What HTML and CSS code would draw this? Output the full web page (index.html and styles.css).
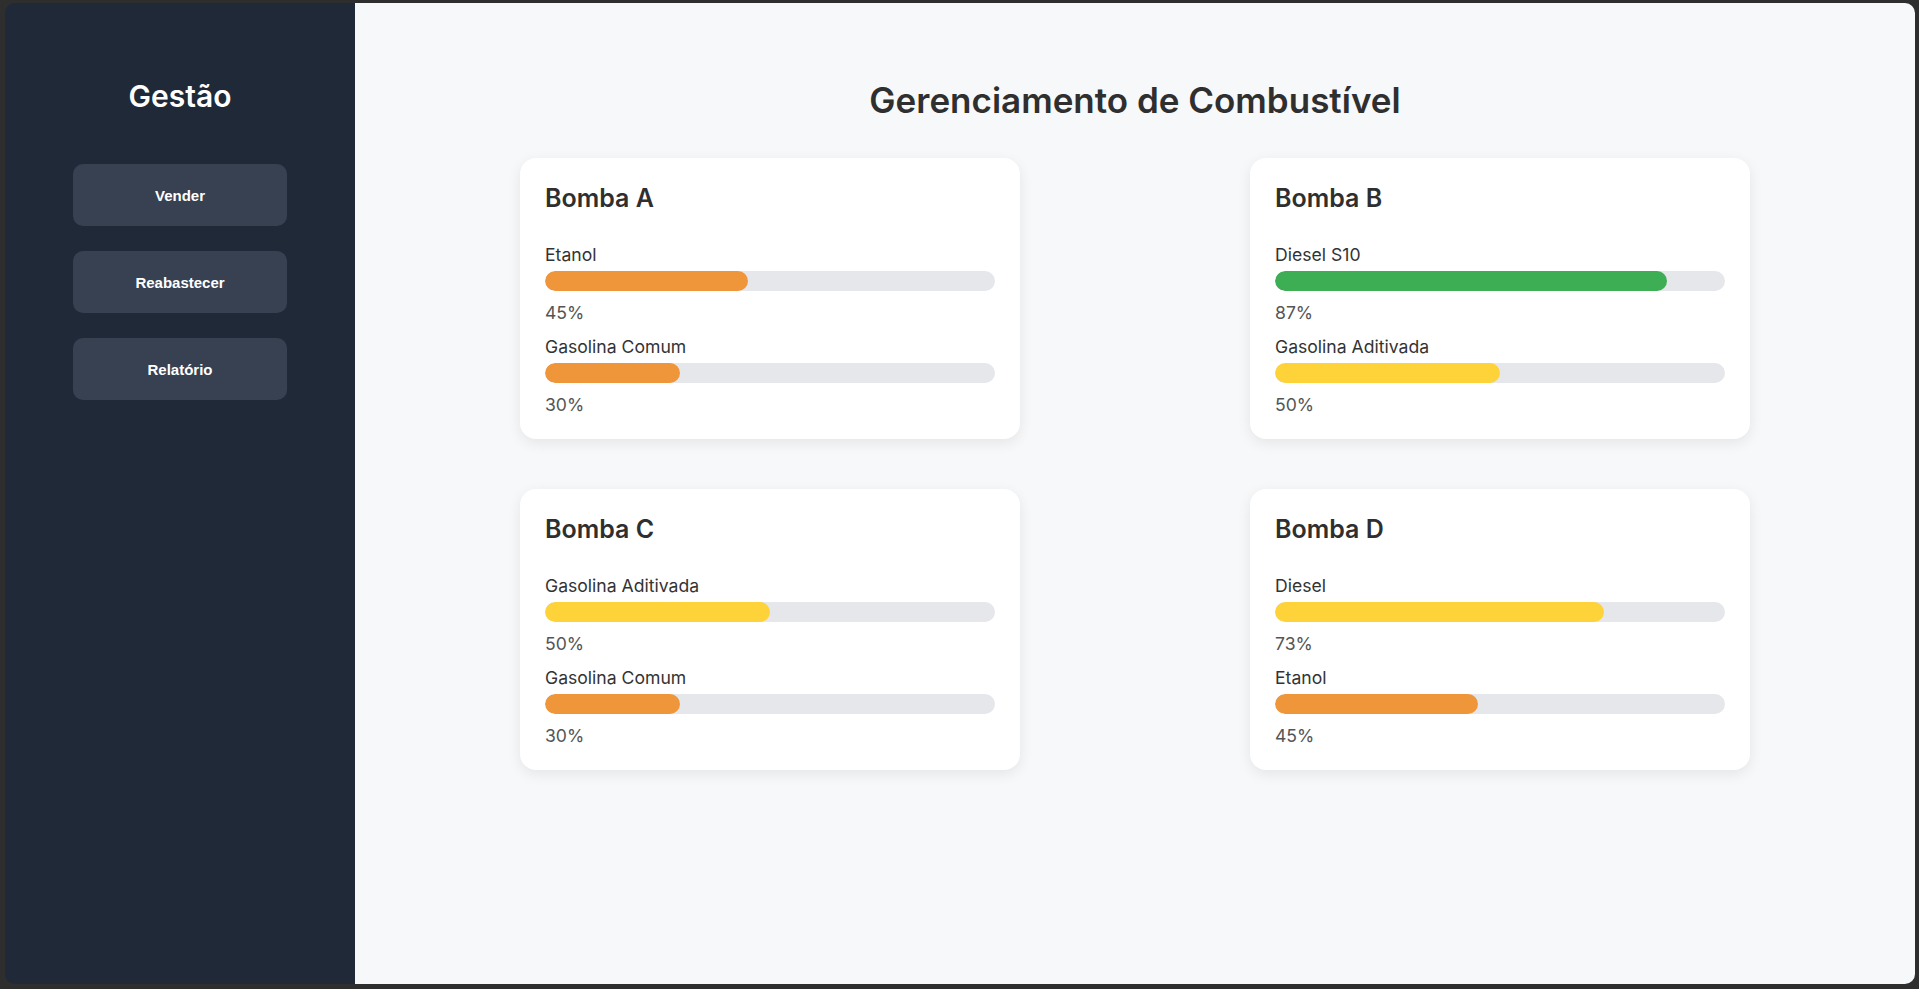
FILE: index.html
```html
<!DOCTYPE html>
<html lang="pt-BR">
<head>
<meta charset="UTF-8">
<title>Gerenciamento de Combustível</title>
<link rel="stylesheet" href="styles.css">
</head>
<body>
<div class="app">
  <aside class="sidebar">
    <h2 class="brand">Gestão</h2>
    <nav class="menu">
      <button class="menu-btn">Vender</button>
      <button class="menu-btn">Reabastecer</button>
      <button class="menu-btn">Relatório</button>
    </nav>
  </aside>
  <main class="main">
    <h1 class="page-title">Gerenciamento de Combustível</h1>
    <section class="pumps">
      <article class="card">
        <h3 class="card-title">Bomba A</h3>
        <div class="fuel">
          <span class="fuel-name">Etanol</span>
          <div class="track"><div class="fill orange" style="width:45%"></div></div>
          <span class="pct">45%</span>
        </div>
        <div class="fuel">
          <span class="fuel-name">Gasolina Comum</span>
          <div class="track"><div class="fill orange" style="width:30%"></div></div>
          <span class="pct">30%</span>
        </div>
      </article>
      <article class="card">
        <h3 class="card-title">Bomba B</h3>
        <div class="fuel">
          <span class="fuel-name">Diesel S10</span>
          <div class="track"><div class="fill green" style="width:87%"></div></div>
          <span class="pct">87%</span>
        </div>
        <div class="fuel">
          <span class="fuel-name">Gasolina Aditivada</span>
          <div class="track"><div class="fill yellow" style="width:50%"></div></div>
          <span class="pct">50%</span>
        </div>
      </article>
      <article class="card">
        <h3 class="card-title">Bomba C</h3>
        <div class="fuel">
          <span class="fuel-name">Gasolina Aditivada</span>
          <div class="track"><div class="fill yellow" style="width:50%"></div></div>
          <span class="pct">50%</span>
        </div>
        <div class="fuel">
          <span class="fuel-name">Gasolina Comum</span>
          <div class="track"><div class="fill orange" style="width:30%"></div></div>
          <span class="pct">30%</span>
        </div>
      </article>
      <article class="card">
        <h3 class="card-title">Bomba D</h3>
        <div class="fuel">
          <span class="fuel-name">Diesel</span>
          <div class="track"><div class="fill yellow" style="width:73%"></div></div>
          <span class="pct">73%</span>
        </div>
        <div class="fuel">
          <span class="fuel-name">Etanol</span>
          <div class="track"><div class="fill orange" style="width:45%"></div></div>
          <span class="pct">45%</span>
        </div>
      </article>
    </section>
  </main>
</div>
</body>
</html>
```

FILE: styles.css
```css
* {
  box-sizing: border-box;
}

html, body {
  margin: 0;
  padding: 0;
  height: 100%;
}

body {
  background: #2e2e2e;
  font-family: Inter, "Noto Sans", sans-serif;
  overflow: hidden;
}

.app {
  display: flex;
  margin: 3px 4px 5px 5px;
  height: 981px;
  border-radius: 10px;
  overflow: hidden;
}

.sidebar {
  width: 350px;
  flex: none;
  background: #1f2937;
  display: flex;
  flex-direction: column;
  align-items: center;
  padding-top: 75px;
}

.brand {
  margin: 0;
  color: #ffffff;
  font-size: 30px;
  font-weight: 600;
  line-height: normal;
}

.menu {
  display: flex;
  flex-direction: column;
  gap: 25px;
  margin-top: 50px;
}

.menu-btn {
  width: 214px;
  height: 62px;
  border: none;
  border-radius: 10px;
  background: #374151;
  color: #ffffff;
  font-family: "Liberation Sans", Arial, sans-serif;
  font-size: 15px;
  font-weight: 700;
  cursor: pointer;
}

.main {
  flex: 1;
  background: #f7f8fa;
  padding-top: 76px;
}

.page-title {
  margin: 0 0 37px;
  text-align: center;
  color: #2f2f2f;
  font-size: 35px;
  font-weight: 600;
  line-height: normal;
}

.pumps {
  display: grid;
  grid-template-columns: 500px 500px;
  column-gap: 230px;
  row-gap: 50px;
  justify-content: center;
}

.card {
  background: #ffffff;
  border-radius: 16px;
  padding: 25px 25px 24px;
  box-shadow: 0 4px 14px rgba(0, 0, 0, 0.08);
  display: flex;
  flex-direction: column;
  gap: 13px;
}

.card-title {
  margin: 0 0 18px;
  color: #2f2f2f;
  font-size: 25px;
  font-weight: 600;
  line-height: normal;
}

.fuel {
  display: flex;
  flex-direction: column;
}

.fuel-name {
  color: #333333;
  font-size: 17.6px;
  line-height: normal;
}

.track {
  margin-top: 6px;
  height: 20px;
  border-radius: 10px;
  background: #e5e7eb;
  overflow: hidden;
}

.fill {
  height: 100%;
  border-radius: 10px;
}

.orange { background: #f0963a; }
.green { background: #3dae53; }
.yellow { background: #fed33a; }

.pct {
  margin-top: 11px;
  color: #555555;
  font-size: 17.6px;
  line-height: normal;
}
```
